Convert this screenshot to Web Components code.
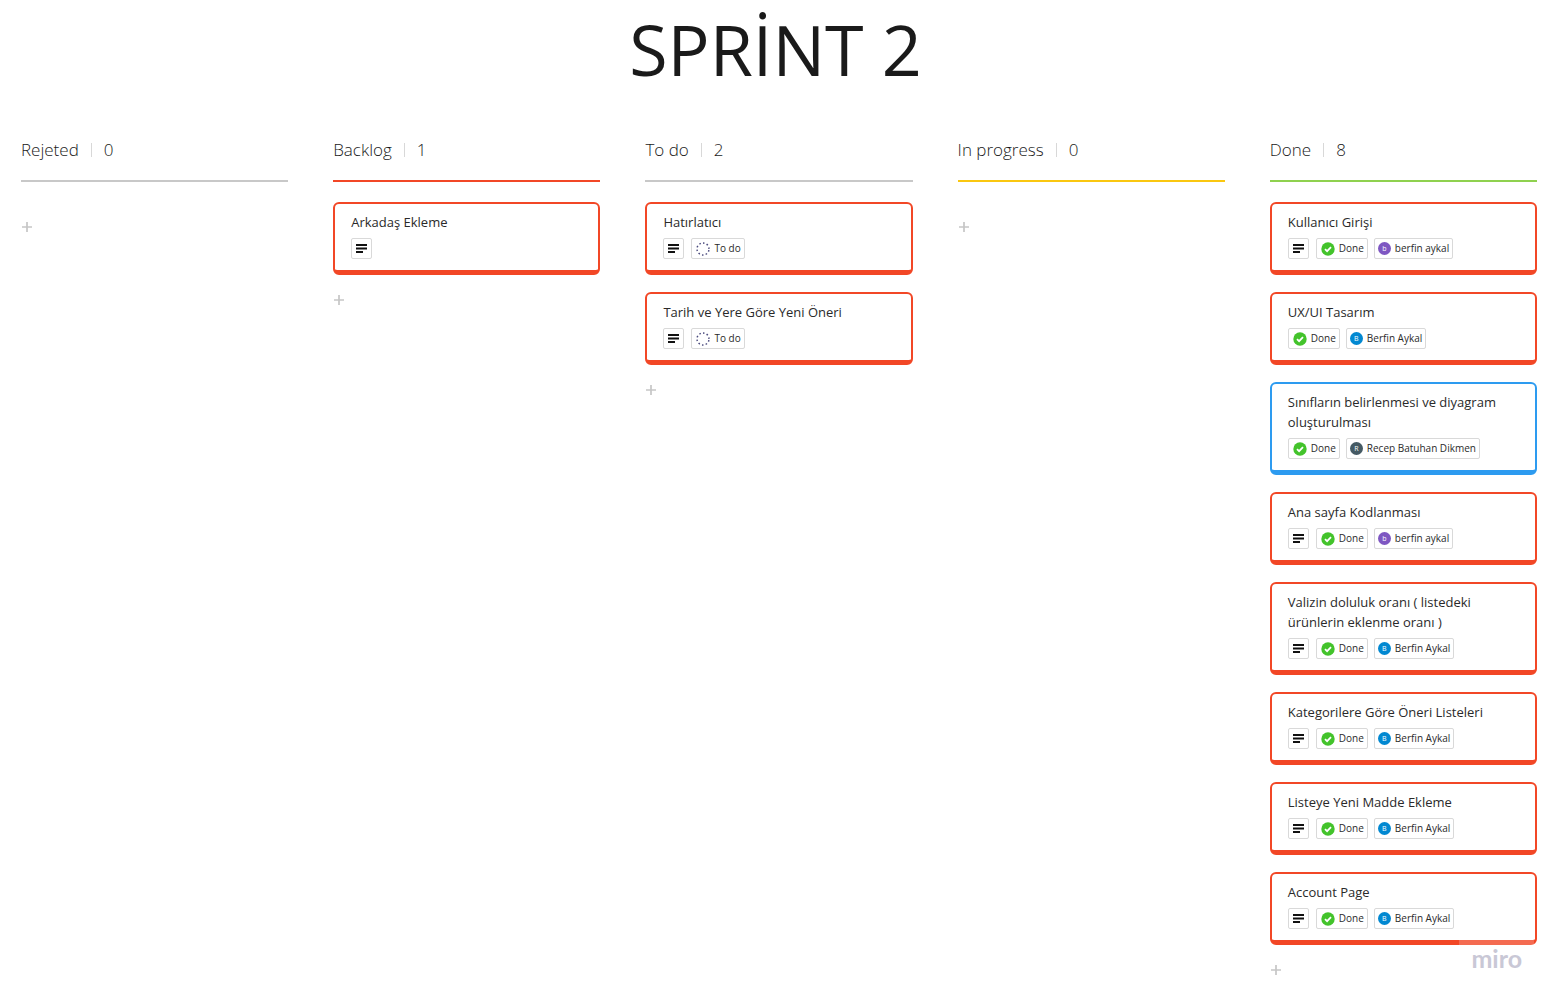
<!DOCTYPE html>
<html lang="tr">
<head>
<meta charset="utf-8">
<meta name="viewport" content="width=device-width, initial-scale=1">
<title>Sprint 2</title>
<style>
body { margin: 0; background: #fff; color: #1a1a1a; font-family: "Open Sans", "Noto Sans", sans-serif; }
</style>
</head>
<body>
<sprint-board heading="SPRİNT 2">
  <board-column label="Rejeted" count="0" accent="#c8c8c8"></board-column>
  <board-column label="Backlog" count="1" accent="#f24726">
    <task-card label="Arkadaş Ekleme"><note-chip></note-chip></task-card>
  </board-column>
  <board-column label="To do" count="2" accent="#c8c8c8">
    <task-card label="Hatırlatıcı"><note-chip></note-chip><status-chip state="todo">To do</status-chip></task-card>
    <task-card label="Tarih ve Yere Göre Yeni Öneri"><note-chip></note-chip><status-chip state="todo">To do</status-chip></task-card>
  </board-column>
  <board-column label="In progress" count="0" accent="#fac710"></board-column>
  <board-column label="Done" count="8" accent="#8fd14f">
    <task-card label="Kullanıcı Girişi"><note-chip></note-chip><status-chip state="done">Done</status-chip><user-chip initial="b" tone="#7e57c2">berfin aykal</user-chip></task-card>
    <task-card label="UX/UI Tasarım"><status-chip state="done">Done</status-chip><user-chip initial="B" tone="#0288d1">Berfin Aykal</user-chip></task-card>
    <task-card label="Sınıfların belirlenmesi ve diyagram oluşturulması" accent="#2d9bf0"><status-chip state="done">Done</status-chip><user-chip initial="R" tone="#455a64">Recep Batuhan Dikmen</user-chip></task-card>
    <task-card label="Ana sayfa Kodlanması"><note-chip></note-chip><status-chip state="done">Done</status-chip><user-chip initial="b" tone="#7e57c2">berfin aykal</user-chip></task-card>
    <task-card label="Valizin doluluk oranı ( listedeki ürünlerin eklenme oranı )"><note-chip></note-chip><status-chip state="done">Done</status-chip><user-chip initial="B" tone="#0288d1">Berfin Aykal</user-chip></task-card>
    <task-card label="Kategorilere Göre Öneri Listeleri"><note-chip></note-chip><status-chip state="done">Done</status-chip><user-chip initial="B" tone="#0288d1">Berfin Aykal</user-chip></task-card>
    <task-card label="Listeye Yeni Madde Ekleme"><note-chip></note-chip><status-chip state="done">Done</status-chip><user-chip initial="B" tone="#0288d1">Berfin Aykal</user-chip></task-card>
    <task-card label="Account Page"><note-chip></note-chip><status-chip state="done">Done</status-chip><user-chip initial="B" tone="#0288d1">Berfin Aykal</user-chip></task-card>
  </board-column>
</sprint-board>
<script>
const define = (name, render) => customElements.define(name, class extends HTMLElement {
  constructor() { super(); this.attachShadow({ mode: "open" }); }
  connectedCallback() { this.shadowRoot.innerHTML = render(this); }
});

define("sprint-board", el => `
<style>
  :host { display: block; position: relative; min-height: 100vh; box-sizing: border-box; }
  h1 { margin: 0; padding: 1px 26px 0 20px; font-size: 70px; line-height: 96px; font-weight: 400; text-align: center; box-sizing: border-box; }
  main { display: grid; grid-template-columns: repeat(5, minmax(0, 1fr)); gap: 45px; padding: 37px 20px 0 21px; }
  board-watermark { position: absolute; right: 23px; bottom: 25px; }
</style>
<h1>${el.getAttribute("heading")}</h1>
<main><slot></slot></main>
<board-watermark></board-watermark>`);

define("board-column", el => `
<style>
  :host { display: block; }
  header { display: flex; align-items: flex-start; gap: 12px; box-sizing: border-box; height: 48px; padding-top: 4px; border-bottom: 2px solid ${el.getAttribute("accent")}; }
  h2, span { margin: 0; font-size: 17px; line-height: 24px; font-weight: 300; color: #1a1a1a; }
  i { width: 1px; height: 14px; margin-top: 5px; background: #d8d8d8; }
  .cards { display: flex; flex-direction: column; gap: 17px; padding-top: 20px; }
  button { display: block; height: 20px; margin: 15px 0 0; padding: 5px 1px; border: 0; background: none; }
  svg { display: block; }
</style>
<header><h2>${el.getAttribute("label")}</h2><i></i><span>${el.getAttribute("count")}</span></header>
<div class="cards"><slot></slot></div>
<button type="button" aria-label="+"><svg width="10" height="10" viewBox="0 0 10 10"><path d="M5 0v10M0 5h10" stroke="#c6c6c6" stroke-width="1.7"/></svg></button>`);

define("task-card", el => `
<style>
  :host { display: block; box-sizing: border-box; padding: 8px 16px 11px; border: 2px solid ${el.getAttribute("accent") || "#f24726"}; border-bottom-width: 5px; border-radius: 6px; background: #fff; }
  h3 { margin: 0 0 6px; font-size: 13px; line-height: 20px; font-weight: 400; color: #2a2a2a; }
  .chips { display: flex; gap: 6px; }
</style>
<h3>${el.getAttribute("label")}</h3>
<div class="chips"><slot></slot></div>`);

const chipStyle = `
  :host { display: flex; align-items: center; gap: 4px; box-sizing: border-box; height: 21px; padding: 0 3px; border: 1px solid #d9d9d9; border-radius: 2px; font-size: 10px; line-height: 16px; white-space: nowrap; color: #2a2a2a; }
  svg { display: block; flex: none; }
  .text { padding-bottom: 2px; }
`;

define("note-chip", () => `
<style>${chipStyle} :host { width: 21px; padding: 0; justify-content: center; margin-right: 1px; }</style>
<svg width="11" height="9" viewBox="0 0 11 9"><path d="M0 1h11M0 4.5h11M0 8h7" stroke="#111" stroke-width="2"/></svg>`);

const stateIcons = {
  done: `<circle cx="7" cy="7" r="6.7" fill="#43c32b"/><path d="M4 7.2l2.1 2 3.9-4" fill="none" stroke="#fff" stroke-width="1.8"/>`,
  todo: `<circle cx="7" cy="7" r="6" fill="none" stroke="#4a4a7d" stroke-width="1.5" stroke-dasharray="1.5 2.27" stroke-dashoffset="2.6"/>`
};
define("status-chip", el => `
<style>${chipStyle} :host { padding-left: 4px; }</style>
<svg width="14" height="14" viewBox="0 0 14 14">${stateIcons[el.getAttribute("state")]}</svg>
<span class="text"><slot></slot></span>`);

define("user-chip", el => `
<style>${chipStyle}
  .avatar { display: flex; align-items: center; justify-content: center; width: 13px; height: 13px; border-radius: 50%; background: ${el.getAttribute("tone")}; color: #fff; font-size: 7px; line-height: 13px; }
</style>
<span class="avatar">${el.getAttribute("initial")}</span>
<span class="text"><slot></slot></span>`);

define("board-watermark", () => `
<style>
  :host { display: block; box-sizing: border-box; padding: 0 12px 2px; background: rgba(255,255,255,.2); color: #c9c8d6; font: 700 25px/36px Lato, "Open Sans", sans-serif; }
</style>miro`);
</script>
</body>
</html>
